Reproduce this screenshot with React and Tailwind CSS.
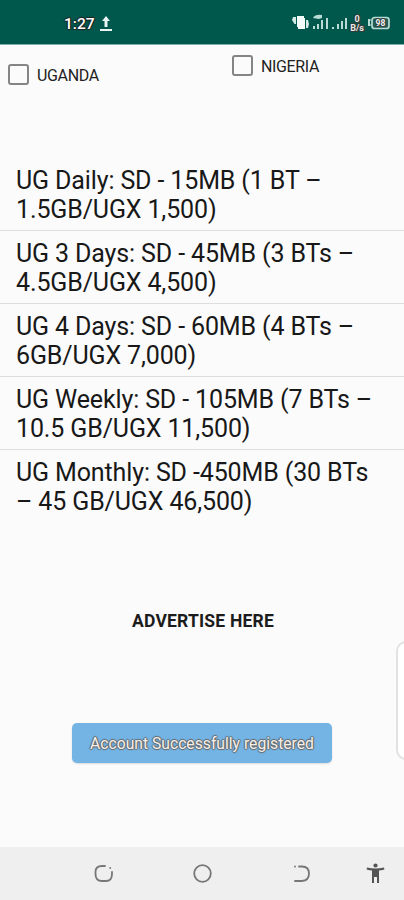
const plans = [
  ["UG Daily: SD - 15MB (1 BT –", "1.5GB/UGX 1,500)"],
  ["UG 3 Days: SD - 45MB (3 BTs –", "4.5GB/UGX 4,500)"],
  ["UG 4 Days: SD - 60MB (4 BTs –", "6GB/UGX 7,000)"],
  ["UG Weekly: SD - 105MB (7 BTs –", "10.5 GB/UGX 11,500)"],
  ["UG Monthly: SD -450MB (30 BTs", "– 45 GB/UGX 46,500)"],
];

const outline =
  "[text-shadow:1px_0_1px_#222,-1px_0_1px_#222,0_1px_1px_#222,0_-1px_1px_#222]";

function StatusBar() {
  return (
    <header className="flex h-[45px] shrink-0 items-center border-b border-[#7fb0a9] bg-[#00574b] text-white">
      <span className={`ml-16 mt-[3px] w-[31px] text-[15.5px] leading-[18px] font-medium whitespace-nowrap ${outline}`}>1:27</span>
      <svg className="mt-[3px] ml-[5px]" width="12" height="16" viewBox="0 0 12 16" fill="#e8f5f2">
        <path d="M6 0 10 5H7.500v6h-3V5H2zM0 13h12v2H0z" />
      </svg>
      <svg className="mt-[2px] ml-auto mr-[13px]" width="100" height="22" viewBox="0 0 100 22">
        <g fill="#f3fbf9">
          <path d="M6 4h7v2h1v11H7v-2H6z" />
          <path d="M2 5h3v7H3.500L1 8zM15 8h2l1 4-1 4h-2z" fill="#d3e9e5" />
        </g>
        <g fill="#b9dbd5">
          <path d="M22 6q2-4 9-3v3l-3 1zM22 14h2v3h-2zM26 12h2v5h-2zM30 8h2v9h-2zM35 6h2v11h-2z" />
          <path d="M41 15h2v2h-2zM46 12h2v5h-2zM50 9h2v8h-2zM54 6h2v11h-2z" />
        </g>
        <g fill="#e9e9e9" stroke="#303c3a" strokeWidth="2.200" paintOrder="stroke" fontFamily="Roboto, sans-serif" fontWeight="700" textAnchor="middle">
          <text x="66" y="10" fontSize="9">0</text>
          <text x="66" y="19" fontSize="9">B/s</text>
        </g>
        <rect x="81" y="5.500" width="17" height="11" rx="2.500" fill="#235e55" stroke="#b9dbd5" strokeWidth="1.700" />
        <path d="M79.500 8h-1.500v5h1.500" fill="none" stroke="#b9dbd5" strokeWidth="2" />
        <text x="89.500" y="14" fontSize="8.500" fontWeight="700" fontFamily="Roboto, sans-serif" textAnchor="middle" fill="#f2f2f2" stroke="#303c3a" strokeWidth="2" paintOrder="stroke">98</text>
      </svg>
    </header>
  );
}

function Country({ name }) {
  return (
    <label className="flex h-[21px] items-center gap-2">
      <span className="size-[21px] rounded-[3px] border-2 border-[#858585] bg-[#fbfbfb]" />
      <span className="pt-[2px] text-[16px] leading-5 tracking-[-0.35px] text-[#222]">{name}</span>
    </label>
  );
}

function NavBar() {
  return (
    <nav className="h-[53px] shrink-0 bg-[#efefef]">
      <svg width="404" height="53" viewBox="0 847 404 53" fill="none" stroke="#777" strokeWidth="1.800" strokeLinecap="round">
        <path d="M105 866h-3q-6.500 0-6.500 6v2q0 7 6.500 7h4q6 0 6-7v-2M110.200 867.800v.3" />
        <circle cx="202.500" cy="873.500" r="8.300" />
        <path d="M295 866.500v.2M299 866.500h3q7 0 7 7t-7 7.500h-7" />
        <g fill="#555" stroke="none">
          <circle cx="375.500" cy="865.500" r="2.100" />
          <path d="M367 867.500q8.500 2 17 0l.4 2q-3 .8-5.400 1V883h-2v-6h-3v6h-2v-12.500q-2.400-.2-5.400-1z" />
        </g>
      </svg>
    </nav>
  );
}

export default function App() {
  return (
    <div className="relative flex h-[900px] w-[404px] flex-col overflow-hidden bg-[#fbfbfb] font-[Roboto,sans-serif] text-[#181818]">
      <StatusBar />
      <div className="flex h-[113px] shrink-0 items-start">
        <div className="w-[224px] pt-[19px] pl-2"><Country name="UGANDA" /></div>
        <div className="pt-[10px] pl-2"><Country name="NIGERIA" /></div>
      </div>
      <ul className="shrink-0">
        {plans.map(([first, second]) => (
          <li key={first} className="h-[73px] border-b border-[#dedede] pt-2 pl-4 text-[25px] leading-[29.300px] tracking-[-0.13px] whitespace-nowrap last:border-transparent">
            <div>{first}</div>
            <div>{second}</div>
          </li>
        ))}
      </ul>
      <h2 className="mt-[88px] text-center text-[17.500px] leading-5 font-bold tracking-[0.2px] text-[#1c1c1c]"><span className="pl-[2px]">ADVERTISE HERE</span></h2>
      <div className="mt-[92px] ml-[72px] flex h-10 w-[260px] items-center justify-center rounded-[5px] bg-[#73b4e4] shadow-[0_1px_2px_#0002]">
        <span className="pt-[2px] text-[15.700px] leading-5 text-[#f5f0ec] [text-shadow:1px_0_1px_#666,-1px_0_1px_#666,0_1px_1px_#666,0_-1px_1px_#666]">Account Successfully registered</span>
      </div>
      <div className="mt-auto"><NavBar /></div>
      <div className="absolute top-[641px] left-[396px] h-[119px] w-5 rounded-xl border-2 border-[#e2e2e2] bg-white" />
    </div>
  );
}
